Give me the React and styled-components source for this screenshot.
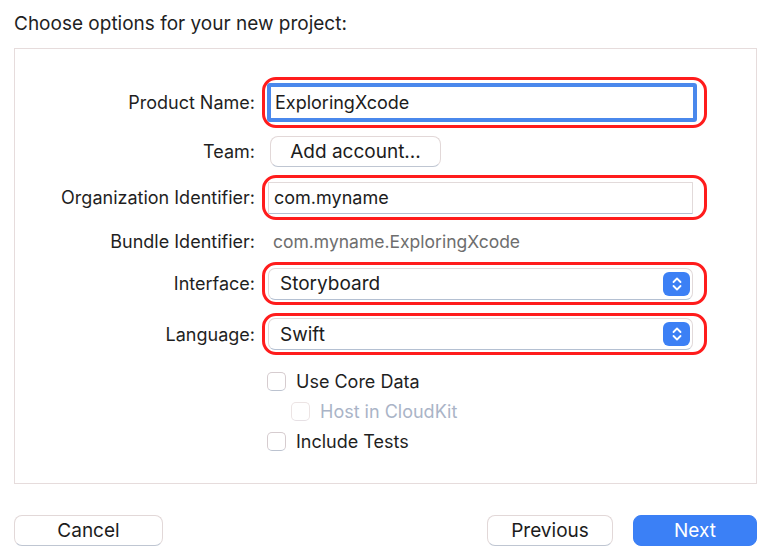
import styled, { createGlobalStyle } from "styled-components";

const GlobalStyle = createGlobalStyle`
    body {
        margin: 0;
        background: #ffffff;
        font-family: Inter, "Noto Sans", "Liberation Sans", sans-serif;
        color: #1f1f1f;
    }
`;

export default function App() {
    return (
        <>
            <GlobalStyle />
            <Page>
                <Title>Choose options for your new project:</Title>
                <Panel>
                    <Form>
                        <Label>Product Name:</Label>
                        <Highlight>
                            <TextField focused value="ExploringXcode" readOnly />
                        </Highlight>

                        <Label>Team:</Label>
                        <div>
                            <PushButton wide>Add account...</PushButton>
                        </div>

                        <Label>Organization Identifier:</Label>
                        <Highlight>
                            <TextField value="com.myname" readOnly />
                        </Highlight>

                        <Label>Bundle Identifier:</Label>
                        <StaticValue>com.myname.ExploringXcode</StaticValue>

                        <Label>Interface:</Label>
                        <Highlight>
                            <PopUp>
                                <span>Storyboard</span>
                                <Stepper />
                            </PopUp>
                        </Highlight>

                        <Label>Language:</Label>
                        <Highlight>
                            <PopUp>
                                <span>Swift</span>
                                <Stepper />
                            </PopUp>
                        </Highlight>

                        <Checks>
                            <CheckRow>
                                <Box />
                                <span>Use Core Data</span>
                            </CheckRow>
                            <CheckRow indent disabled>
                                <Box disabled />
                                <span>Host in CloudKit</span>
                            </CheckRow>
                            <CheckRow>
                                <Box />
                                <span>Include Tests</span>
                            </CheckRow>
                        </Checks>
                    </Form>
                </Panel>
                <Footer>
                    <PushButton size={149}>Cancel</PushButton>
                    <Spacer />
                    <PushButton size={126}>Previous</PushButton>
                    <PushButton size={124} primary>Next</PushButton>
                </Footer>
            </Page>
        </>
    );
}

function Stepper() {
    return (
        <StepperBox>
            <svg width="12" height="16" viewBox="0 0 12 16" fill="none" stroke="#fff" strokeWidth="1.8" strokeLinecap="round" strokeLinejoin="round">
                <path d="M2.5 6 L6 2.5 L9.5 6" />
                <path d="M2.5 10 L6 13.5 L9.5 10" />
            </svg>
        </StepperBox>
    );
}

const Page = styled.div`
    width: 770px;
    height: 560px;
    padding: 12px 13px 0 14px;
    box-sizing: border-box;
`;

const Title = styled.div`
    font-size: 19px;
    line-height: 23px;
    color: #1f1f1f;
`;

const Panel = styled.div`
    margin-top: 13px;
    height: 436px;
    box-sizing: border-box;
    border: 1px solid #e6dcdc;
    background: #fff;
    padding: 28px 49px 0 0;
`;

const Form = styled.div`
    display: grid;
    grid-template-columns: 240px 1fr;
    grid-template-rows: 51px 31px 45px 26px 43px 42px auto;
    column-gap: 7px;
    row-gap: 8px;
    align-items: center;
`;

const Label = styled.div`
    text-align: right;
    font-size: 18px;
    color: #1f1f1f;
    white-space: nowrap;
`;

const Highlight = styled.div`
    border: 3px solid #ff1c1c;
    border-radius: 14px;
    padding: 3px 11px 3px 3px;
    display: flex;
    align-items: center;
    height: 100%;
    box-sizing: border-box;
`;

const TextField = styled.input`
    flex: 1;
    box-sizing: border-box;
    height: ${p => p.focused ? "39px" : "32px"};
    margin-left: ${p => p.focused ? "-1px" : "0"};
    margin-right: ${p => p.focused ? "-4px" : "0"};
    border: ${p => p.focused ? "4px solid #4a88ec" : "1px solid #e2dada"};
    border-bottom-color: ${p => p.focused ? "#4a88ec" : "#b4c0d2"};
    border-radius: ${p => p.focused ? "3px" : "1px"};
    padding: 0 0 0 ${p => p.focused ? "4px" : "5px"};
    font-family: inherit;
    font-size: 18px;
    color: #1c1c1c;
    background: #fff;
    outline: none;
`;

const PopUp = styled.div`
    flex: 1;
    height: 32px;
    box-sizing: border-box;
    border: 1px solid #e2dada;
    border-bottom-color: #b4c0d2;
    border-radius: 7px;
    display: flex;
    align-items: center;
    justify-content: space-between;
    padding: 0 2px 0 11px;
    font-size: 19px;
    color: #1c1c1c;
`;

const StepperBox = styled.div`
    width: 27px;
    height: 24px;
    border-radius: 6px;
    background: #3c80f5;
    display: flex;
    align-items: center;
    justify-content: center;
`;

const StaticValue = styled.div`
    font-size: 17.5px;
    color: #6e6e6e;
    padding-left: 11px;
`;

const PushButton = styled.button`
    width: ${p => p.wide ? "171px" : `${p.size}px`};
    height: 31px;
    margin-left: ${p => p.wide ? "8px" : "0"};
    box-sizing: border-box;
    border-radius: 8px;
    border: 1px solid ${p => p.primary ? "#3b7ff5" : "#e2d8d8"};
    border-bottom-color: ${p => p.primary ? "#3b7ff5" : "#bfc6d2"};
    background: ${p => p.primary ? "#3b80f6" : "#fff"};
    color: ${p => p.primary ? "#fff" : "#1c1c1c"};
    font-family: inherit;
    font-size: 19px;
    padding: 0;
`;

const Checks = styled.div`
    grid-column: 2;
    display: flex;
    flex-direction: column;
    margin-top: 3px;
    padding-left: 5px;
`;

const CheckRow = styled.label`
    display: flex;
    align-items: center;
    gap: 10px;
    height: 30px;
    padding-left: ${p => p.indent ? "24px" : "0"};
    font-size: 18px;
    color: ${p => p.disabled ? "#aab4c7" : "#1f1f1f"};
`;

const Box = styled.span`
    width: 19px;
    height: 19px;
    box-sizing: border-box;
    border-radius: 5px;
    border: 1px solid ${p => p.disabled ? "#ece4e4" : "#d6cccf"};
    border-bottom-color: ${p => p.disabled ? "#e6e0e4" : "#bcc3d0"};
    background: #fff;
`;

const Footer = styled.div`
    display: flex;
    gap: 20px;
    margin-top: 31px;
`;

const Spacer = styled.div`
    flex: 1;
`;
